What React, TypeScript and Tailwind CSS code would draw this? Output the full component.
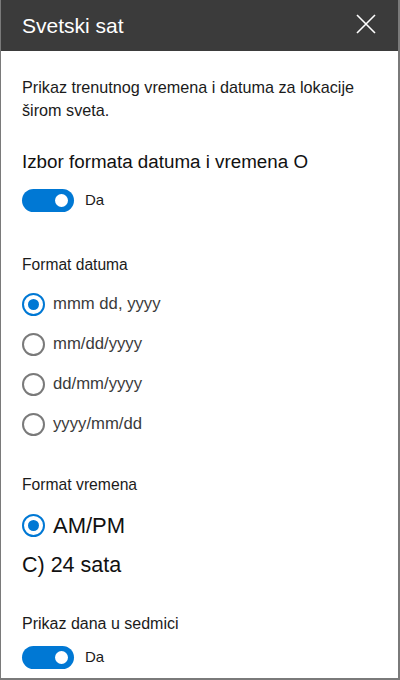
import React from 'react';

const font = { fontFamily: '"Liberation Sans", Arial, sans-serif' };

function Toggle({ label }: { label: string }) {
  return (
    <div className="flex h-[24px] items-center">
      <div className="flex h-[23px] w-[52px] items-center justify-end rounded-full bg-[#0078d4] pr-[6px]">
        <div className="h-[13px] w-[13px] rounded-full bg-white" />
      </div>
      <span className="ml-[11px] text-[15px] text-[#1b1b1b]">{label}</span>
    </div>
  );
}

function Radio({ label, checked, big }: { label: string; checked?: boolean; big?: boolean }) {
  return (
    <div className="flex h-[40px] items-center">
      <div
        className={`flex h-[23px] w-[23px] items-center justify-center rounded-full border-2 ${
          checked ? 'border-[#0078d4]' : 'border-[#7a7a7a]'
        }`}
      >
        {checked && <div className="h-[11px] w-[11px] rounded-full bg-[#0078d4]" />}
      </div>
      <span className={`ml-[8px] ${big ? 'text-[22px] text-[#111]' : 'text-[16.7px] text-[#3a3a3a]'}`}>{label}</span>
    </div>
  );
}

export default function App() {
  return (
    <div
      style={font}
      className="flex h-[680px] w-[400px] flex-col border-r-2 border-b-2 border-l border-[#7a7a7a] bg-white"
    >
      <header className="flex h-[51px] items-center justify-between bg-[#3b3b3b] pl-[21px] pr-[22px]">
        <h1 className="text-[21px] text-white">Svetski sat</h1>
        <svg width="20" height="20" viewBox="0 0 20 20" className="mb-[4px]">
          <path d="M1 1L19 19M19 1L1 19" stroke="#fff" strokeWidth="1.6" />
        </svg>
      </header>

      <div className="flex flex-col pl-[21px] pr-4">
        <p className="mt-[25px] max-w-[345px] text-[16.2px] leading-[23px] text-[#1b1b1b]">
          Prikaz trenutnog vremena i datuma za lokacije širom sveta.
        </p>

        <h2 className="mt-[27px] text-[18.8px] leading-[26px] text-[#111]">Izbor formata datuma i vremena O</h2>
        <div className="mt-[13px]">
          <Toggle label="Da" />
        </div>

        <div className="mt-[43px] text-[15.6px] leading-[20px] text-[#1b1b1b]">Format datuma</div>
        <div className="mt-[9px] flex flex-col">
          <Radio label="mmm dd, yyyy" checked />
          <Radio label="mm/dd/yyyy" />
          <Radio label="dd/mm/yyyy" />
          <Radio label="yyyy/mm/dd" />
        </div>

        <div className="mt-[31px] text-[15.7px] leading-[20px] text-[#1b1b1b]">Format vremena</div>
        <div className="mt-[10px] flex flex-col">
          <Radio label="AM/PM" checked big />
          <div className="flex h-[40px] items-center text-[21.5px] text-[#111]">C) 24 sata</div>
        </div>

        <div className="mt-[29px] text-[16px] leading-[20px] text-[#1b1b1b]">Prikaz dana u sedmici</div>
        <div className="mt-[11px]">
          <Toggle label="Da" />
        </div>
      </div>
    </div>
  );
}
